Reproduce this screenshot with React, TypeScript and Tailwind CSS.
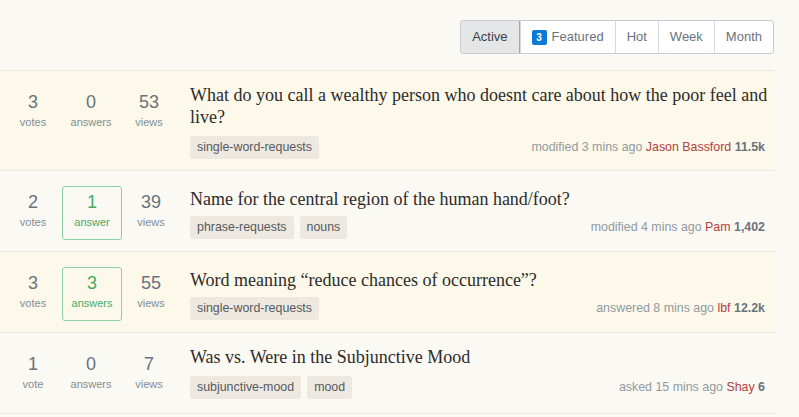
const tabs = ["Active", "Featured", "Hot", "Week", "Month"];

type Question = {
  votes: number;
  answers: number;
  views: number;
  title: string;
  tags: string[];
  action: string;
  user: string;
  rep: string;
  hot?: boolean;
};

const questions: Question[] = [
  {
    votes: 3,
    answers: 0,
    views: 53,
    title: "What do you call a wealthy person who doesnt care about how the poor feel and live?",
    tags: ["single-word-requests"],
    action: "modified 3 mins ago",
    user: "Jason Bassford",
    rep: "11.5k",
    hot: true,
  },
  {
    votes: 2,
    answers: 1,
    views: 39,
    title: "Name for the central region of the human hand/foot?",
    tags: ["phrase-requests", "nouns"],
    action: "modified 4 mins ago",
    user: "Pam",
    rep: "1,402",
  },
  {
    votes: 3,
    answers: 3,
    views: 55,
    title: "Word meaning \u201creduce chances of occurrence\u201d?",
    tags: ["single-word-requests"],
    action: "answered 8 mins ago",
    user: "lbf",
    rep: "12.2k",
    hot: true,
  },
  {
    votes: 1,
    answers: 0,
    views: 7,
    title: "Was vs. Were in the Subjunctive Mood",
    tags: ["subjunctive-mood", "mood"],
    action: "asked 15 mins ago",
    user: "Shay",
    rep: "6",
  },
];

function Stat({ value, label, boxed }: { value: number; label: string; boxed?: boolean }) {
  return (
    <div
      className={
        boxed
          ? "w-[60px] flex flex-col items-center border border-[#8fd0a3] rounded-[3px] pt-[3px] pb-[9px] text-[#48a868]"
          : "w-[58px] flex flex-col items-center border border-transparent pt-[3px] pb-[9px] text-[#6a737c]"
      }
    >
      <span className="text-[18px] leading-[24px]">{value}</span>
      <span className={boxed ? "text-[11px] leading-[16px]" : "text-[11px] leading-[16px] text-[#848d95]"}>
        {label}
      </span>
    </div>
  );
}

function Row({ q }: { q: Question }) {
  const answered = q.answers > 0;
  return (
    <div className={`flex border-t border-[#ece8dd] pt-[15px] pb-[11px] ${q.hot ? "bg-[#fdf9ea]" : ""}`}>
      <div className="flex pl-[4px] w-[190px] shrink-0 items-start">
        <Stat value={q.votes} label={q.votes === 1 ? "vote" : "votes"} />
        <Stat value={q.answers} label={q.answers === 1 ? "answer" : "answers"} boxed={answered} />
        <Stat value={q.views} label="views" />
      </div>
      <div className={`flex-1 ${answered ? "mt-[2px]" : "-mt-[2px]"}`}>
        <h3 className="font-['Liberation_Serif',serif] text-[18px] leading-[22px] text-[#2d2b29]">{q.title}</h3>
        <div className={`flex items-center justify-between ${answered ? "mt-[6px]" : "mt-[8px]"}`}>
          <div className="flex gap-[6px]">
            {q.tags.map((t) => (
              <span key={t} className="bg-[#ede8e0] text-[#555a5f] text-[12.4px] leading-[23px] px-[7px] rounded-[3px]">
                {t}
              </span>
            ))}
          </div>
          <div className="mr-[10px] text-[12.4px] text-[#9199a1]">
            {q.action} <span className="text-[#b3403f]">{q.user}</span>{" "}
            <span className="font-bold text-[#6a737c]">{q.rep}</span>
          </div>
        </div>
      </div>
    </div>
  );
}

export default function App() {
  return (
    <div className="min-h-[417px] bg-[#fbf9f4] font-['Liberation_Sans',Arial,sans-serif]">
      <div className="w-[775px]">
        <div className="h-[70px] flex justify-end items-start pt-[20px] pr-[1px]">
          <div className="flex border border-[#c8ccd0] rounded-[3px] bg-white text-[13px] overflow-hidden">
            {tabs.map((t, i) => (
              <div
                key={t}
                className={`h-[32px] flex items-center gap-[5px] px-[11px] ${i > 0 ? "border-l border-[#d6d9dc]" : ""} ${
                  i === 0 ? "bg-[#e4e6e8] text-[#3b4045] border-r border-[#9fa6ad]" : "text-[#6a737c]"
                }`}
              >
                {t === "Featured" && (
                  <span className="w-[15px] h-[15px] rounded-[2px] bg-[#0a7ad6] text-white text-[10px] font-bold flex items-center justify-center">
                    3
                  </span>
                )}
                {t}
              </div>
            ))}
          </div>
        </div>
        {questions.map((q) => (
          <Row key={q.title} q={q} />
        ))}
        <div className="border-t border-[#ece8dd]" />
      </div>
    </div>
  );
}
